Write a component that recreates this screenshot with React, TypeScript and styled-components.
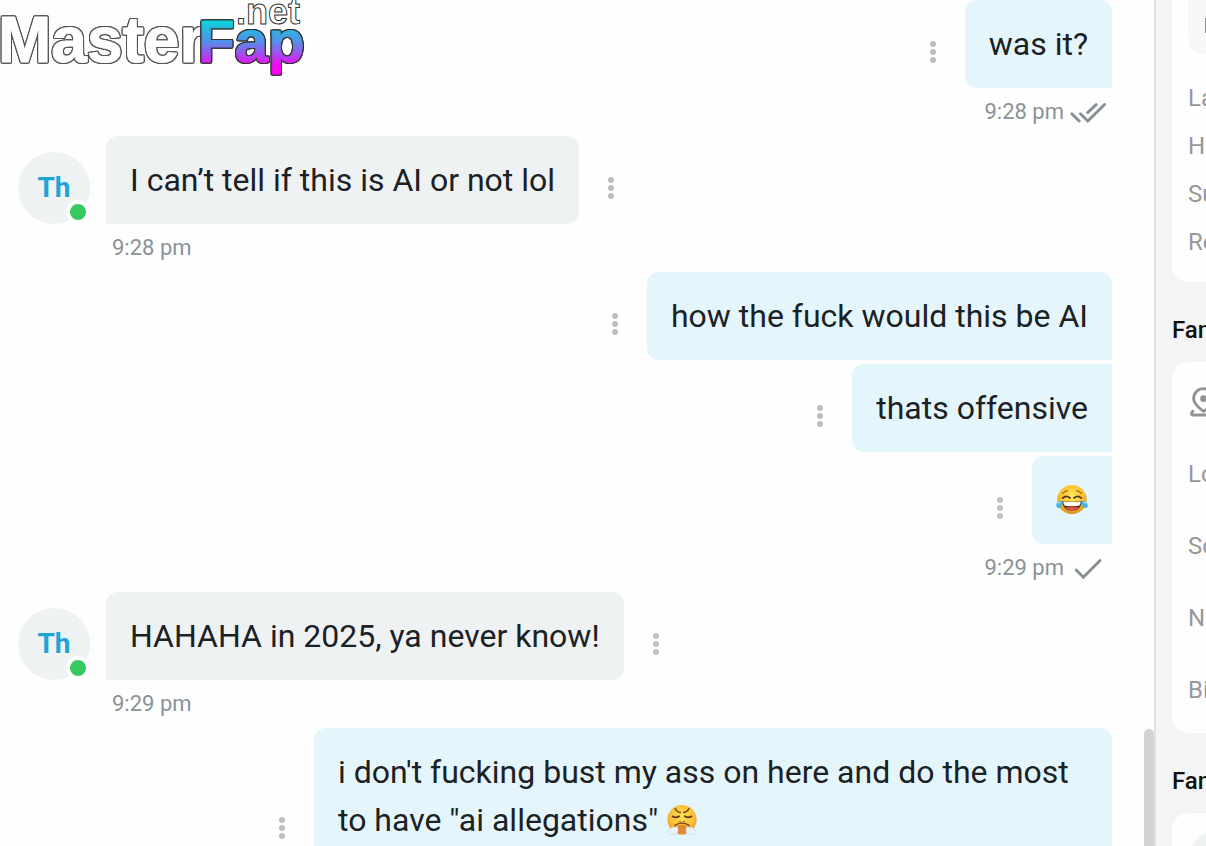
import React from 'react';
import styled, { createGlobalStyle } from 'styled-components';

const GlobalStyle = createGlobalStyle`
  * { box-sizing: border-box; }
  body { margin: 0; background: #fefefe; font-family: Roboto, "Liberation Sans", sans-serif; }
  p, h2 { margin: 0; font-weight: 400; }
`;

const Page = styled.div`
  position: relative;
  display: flex;
  height: 100vh;
  overflow: hidden;
`;

const Watermark = styled.a`
  position: absolute;
  top: 0;
  left: 0;
  z-index: 1;
  svg { display: block; overflow: visible; }
`;

const Outlined = styled.text<{ $line: string }>`
  font-family: "Liberation Sans", Arial, sans-serif;
  font-weight: 700;
  stroke-linejoin: round;
  filter: drop-shadow(1px 0 0 ${(p) => p.$line}) drop-shadow(-1px 0 0 ${(p) => p.$line})
    drop-shadow(0 1px 0 ${(p) => p.$line}) drop-shadow(0 -1px 0 ${(p) => p.$line});
`;

const Chat = styled.main`
  position: relative;
  flex: 1;
  min-width: 0;
  padding: 0 42px 0 18px;
  background: #fefefe;
  overflow: hidden;
`;

const ScrollThumb = styled.div`
  position: absolute;
  right: 0;
  bottom: 0;
  width: 10px;
  height: 117px;
  border-radius: 5px 5px 0 0;
  background: #d3d3d3;
`;

const Group = styled.section`
  display: flex;
  flex-direction: column;
  gap: 4px;
`;

const Row = styled.div<{ $own?: boolean }>`
  display: flex;
  flex-direction: ${(p) => (p.$own ? 'row-reverse' : 'row')};
  align-items: flex-end;
`;

const Bubble = styled.p<{ $own?: boolean; $joined?: boolean }>`
  max-width: 798px;
  padding: 20px 24px;
  border-radius: ${(p) =>
    p.$own ? (p.$joined ? '12px 0 0 12px' : '12px 12px 0 12px') : '12px 12px 12px 0'};
  background: ${(p) => (p.$own ? '#e4f6fc' : '#eef2f3')};
  color: #1b2124;
  font-size: 32px;
  line-height: 48px;
`;

const MenuButton = styled.button`
  display: flex;
  flex-direction: column;
  align-items: center;
  justify-content: center;
  gap: 2px;
  width: 64px;
  height: 72px;
  padding: 0;
  border: 0;
  background: none;
  cursor: pointer;
`;

const Dot = styled.span`
  width: 6px;
  height: 6px;
  border-radius: 50%;
  background: #bcbebf;
`;

const Meta = styled.div<{ $own?: boolean }>`
  display: flex;
  align-items: center;
  justify-content: ${(p) => (p.$own ? 'flex-end' : 'flex-start')};
  gap: 6px;
  height: 48px;
  margin-top: -4px;
  padding: ${(p) => (p.$own ? '0 6px' : '0 0 0 94px')};
  color: #8a9296;
  font-size: 22px;
  line-height: 48px;
`;

const Avatar = styled.div`
  position: relative;
  flex: none;
  width: 72px;
  height: 72px;
  margin-right: 16px;
  border-radius: 50%;
  background: #eef2f3;
  color: #1fa5d4;
  font-size: 28px;
  font-weight: 700;
  line-height: 72px;
  text-align: center;
`;

const Online = styled.span`
  position: absolute;
  right: 0;
  bottom: 0;
  width: 24px;
  height: 24px;
  border: 4px solid #fefefe;
  border-radius: 50%;
  background: #35ca5f;
`;

const Emoji = styled.svg`
  display: inline-block;
  width: 32px;
  height: 32px;
  vertical-align: -5px;
`;

const Sidebar = styled.aside`
  flex: none;
  width: 52px;
  overflow: hidden;
  padding-left: 16px;
  border-left: 2px solid #e1e1e2;
  background: #f4f4f4;
`;

const Card = styled.div<{ $kind: 'top' | 'list' | 'last' }>`
  width: 400px;
  padding: ${(p) => (p.$kind === 'top' ? '0 16px 16px' : p.$kind === 'list' ? '4px 16px 7px' : '16px')};
  border-radius: ${(p) => (p.$kind === 'top' ? '0 0 16px 16px' : '16px')};
  background: #fefefe;
`;

const Field = styled.div`
  height: 54px;
  margin-bottom: 20px;
  padding-left: 16px;
  border-radius: 0 0 16px 16px;
  background: #f7f7f7;
  svg { display: block; }
`;

const Item = styled.p<{ $tall?: boolean }>`
  display: flex;
  align-items: center;
  height: ${(p) => (p.$tall ? 72 : 48)}px;
  color: #98989a;
  font-size: 24px;
`;

const Heading = styled.h2`
  padding-top: 16px;
  color: #111;
  font-size: 24px;
  font-weight: 500;
  line-height: 64px;
`;

const Circle = styled.div`
  width: 64px;
  height: 64px;
  border-radius: 50%;
  background: #eef2f3;
`;

const Menu = () => (
  <MenuButton type="button" aria-label="Message options">
    <Dot />
    <Dot />
    <Dot />
  </MenuButton>
);

const Own = ({ children, joined }: { children: React.ReactNode; joined?: boolean }) => (
  <Row $own>
    <Bubble $own $joined={joined}>{children}</Bubble>
    <Menu />
  </Row>
);

const Theirs = ({ children }: { children: React.ReactNode }) => (
  <Row>
    <Avatar>
      Th
      <Online />
    </Avatar>
    <Bubble>{children}</Bubble>
    <Menu />
  </Row>
);

const Ticks = ({ double }: { double?: boolean }) => (
  <svg width="36" height="24" viewBox="0 0 36 24" fill="none" stroke="#868e93" strokeWidth="2.8" strokeLinecap="round" strokeLinejoin="miter">
    {double ? (
      <path d="M1.8 13.8 9.2 21M10.4 13.8 17.8 21 34.6 4.6M17.6 12.6 26.2 4.6" />
    ) : (
      <path d="M6.2 14 13.4 21.2 30 4.6" />
    )}
  </svg>
);

const Joy = () => (
  <Emoji viewBox="0 0 32 32" role="img" aria-label="Face with tears of joy">
    <defs>
      <radialGradient id="joy" cx=".5" cy=".4" r=".6">
        <stop offset="0" stopColor="#ffe95c" />
        <stop offset=".65" stopColor="#fbc52f" />
        <stop offset="1" stopColor="#dc8b1b" />
      </radialGradient>
    </defs>
    <circle cx="16" cy="15.5" r="14.6" fill="url(#joy)" />
    <path d="M6.5 9.6q2-2.5 5-2.7M25.5 9.6q-2-2.5-5-2.7" fill="none" stroke="#a6681c" strokeWidth="1.2" strokeLinecap="round" />
    <path d="M6.6 14.2q3.7-3.6 7.4-.2M18 14q3.7-3.4 7.4.2" fill="none" stroke="#59341a" strokeWidth="1.7" strokeLinecap="round" />
    <path d="M6 17q10 1.6 20 0c-.4 6.4-4.2 10-10 10S6.4 23.4 6 17Z" fill="#673519" />
    <path d="M7.3 17.4q8.7 1.3 17.4 0-.2 3.4-1.4 4-7.3 1-14.6 0-1.2-.6-1.4-4Z" fill="#fff" />
    <path d="M9.5 24q6.5-2.8 13 0-2.5 3-6.5 3t-6.5-3Z" fill="#d35644" />
    <path d="M6.6 16.8C3.5 16.7.3 18.7.2 21.6c0 2.3 2.9 3.4 4.6 1.7 1.5-1.5 1.5-4 1.8-6.5ZM25.4 16.8c3.1-.1 6.3 1.9 6.4 4.8 0 2.3-2.9 3.4-4.6 1.7-1.5-1.5-1.5-4-1.8-6.5Z" fill="#45b4e4" />
    <path d="M2 20q1.2-1.5 2.6-1.9M30 20q-1.2-1.5-2.6-1.9" fill="none" stroke="#a1e3f5" strokeWidth="1.2" />
  </Emoji>
);

const Triumph = () => (
  <Emoji viewBox="0 0 32 32" role="img" aria-label="Face with steam from nose">
    <defs>
      <radialGradient id="triumph" cx=".5" cy=".4" r=".6">
        <stop offset="0" stopColor="#ffe258" />
        <stop offset=".7" stopColor="#fcbe36" />
        <stop offset="1" stopColor="#e99625" />
      </radialGradient>
    </defs>
    <circle cx="16" cy="15.5" r="14.6" fill="url(#triumph)" />
    <path d="M9 4.5q1.7 3.4 5.3 4.1M23 4.5q-1.7 3.4-5.3 4.1" fill="none" stroke="#7b461d" strokeWidth="1.5" strokeLinecap="round" />
    <path d="M6.5 12.3q3.3 2.3 6.7-.1M18.8 12.2q3.4 2.4 6.7.1" fill="none" stroke="#633719" strokeWidth="1.7" strokeLinecap="round" />
    <path d="M11.5 22q4.5-3 9 0l-.6 8q-3.9 1.2-7.8 0Z" fill="#e38a30" />
    <path d="M9 21.5q7-5 14 0" fill="none" stroke="#8b4a20" strokeWidth="1.6" strokeLinecap="round" />
    <path d="M14.6 17.5q-1-.7-1.7.2M17.4 17.5q1-.7 1.7.2" fill="none" stroke="#965722" strokeWidth="1" strokeLinecap="round" />
    <path d="M10.8 22.5c-.6.7-1.5 1-2.6 1-2-.9-3.6.2-3.8 1.6-2.3.2-3.5 2-2.7 3.9 1 2.4 4.8 2.2 5.6 1 2 1.5 4.5.2 4.4-1.9.8-1.9.3-4-.9-5.6ZM21.2 22.5c.6.7 1.5 1 2.6 1 2-.9 3.6.2 3.8 1.6 2.3.2 3.5 2 2.7 3.9-1 2.4-4.8 2.2-5.6 1-2 1.5-4.5.2-4.4-1.9-.8-1.9-.3-4 .9-5.6Z" fill="#eaf1fb" stroke="#b9cbdc" strokeWidth=".5" />
  </Emoji>
);

const LocationIcon = () => (
  <svg width="32" height="32" viewBox="0 0 32 32" fill="none" stroke="#929294" strokeWidth="2.8" strokeLinecap="round" strokeLinejoin="round">
    <path d="M15.5 25.4C10 21.5 5.6 17.6 5.6 12.6a9.9 9.9 0 0 1 19.8 0c0 5-4.4 8.9-9.9 12.8Z" />
    <circle cx="15.5" cy="12.6" r="2" fill="#929294" />
    <path d="M5 25.2c-2 1.4-2.2 3.8.6 3.8h19.8c2.8 0 2.6-2.4.6-3.8" />
  </svg>
);

const Logo = () => (
  <svg width="304" height="80" viewBox="0 0 304 80">
    <defs>
      <linearGradient id="logo" gradientUnits="userSpaceOnUse" x1="0" y1="18" x2="0" y2="74">
        <stop offset="0" stopColor="#00dfd8" />
        <stop offset=".45" stopColor="#5b88e8" />
        <stop offset=".85" stopColor="#f20cf5" />
        <stop offset="1" stopColor="#ff00fb" />
      </linearGradient>
    </defs>
    <Outlined $line="#555" x="-2" y="62" fontSize="64" fill="#fff" stroke="#fff" strokeWidth="1">Master</Outlined>
    <Outlined $line="#333" x="198" y="62" fontSize="60" fill="url(#logo)" stroke="url(#logo)" strokeWidth="1">Fap</Outlined>
    <text x="236" y="24" fontFamily="'Liberation Sans', Arial, sans-serif" fontSize="36" fontWeight="700" fill="#fff" stroke="#333" strokeWidth="1">.net</text>
  </svg>
);

export default function App() {
  return (
    <Page>
      <GlobalStyle />
      <Watermark href="#" aria-label="MasterFap.net">
        <Logo />
      </Watermark>
      <Chat>
        <Group>
          <Own>was it?</Own>
          <Meta $own>
            <time>9:28 pm</time>
            <Ticks double />
          </Meta>
        </Group>
        <Group>
          <Theirs>I can’t tell if this is AI or not lol</Theirs>
          <Meta><time>9:28 pm</time></Meta>
        </Group>
        <Group>
          <Own>how the fuck would this be AI</Own>
          <Own joined>thats offensive</Own>
          <Own joined><Joy /></Own>
          <Meta $own>
            <time>9:29 pm</time>
            <Ticks />
          </Meta>
        </Group>
        <Group>
          <Theirs>HAHAHA in 2025, ya never know!</Theirs>
          <Meta><time>9:29 pm</time></Meta>
        </Group>
        <Group>
          <Own>
            i don't fucking bust my ass on here and do the most to have "ai allegations" <Triumph />
          </Own>
        </Group>
        <ScrollThumb />
      </Chat>
      <Sidebar>
        <Card $kind="top">
          <Field>
            <svg width="24" height="54" viewBox="0 0 24 54" fill="none" stroke="#8f8f91" strokeWidth="2">
              <path d="M2 19v13h14V19Z" />
            </svg>
          </Field>
          <Item>La</Item>
          <Item>H</Item>
          <Item>Su</Item>
          <Item>Re</Item>
        </Card>
        <Heading>Fan</Heading>
        <Card $kind="list">
          <Item $tall><LocationIcon /></Item>
          <Item $tall>Lo</Item>
          <Item $tall>So</Item>
          <Item $tall>N</Item>
          <Item $tall>Bi</Item>
        </Card>
        <Heading>Fan</Heading>
        <Card $kind="last">
          <Circle />
        </Card>
      </Sidebar>
    </Page>
  );
}
